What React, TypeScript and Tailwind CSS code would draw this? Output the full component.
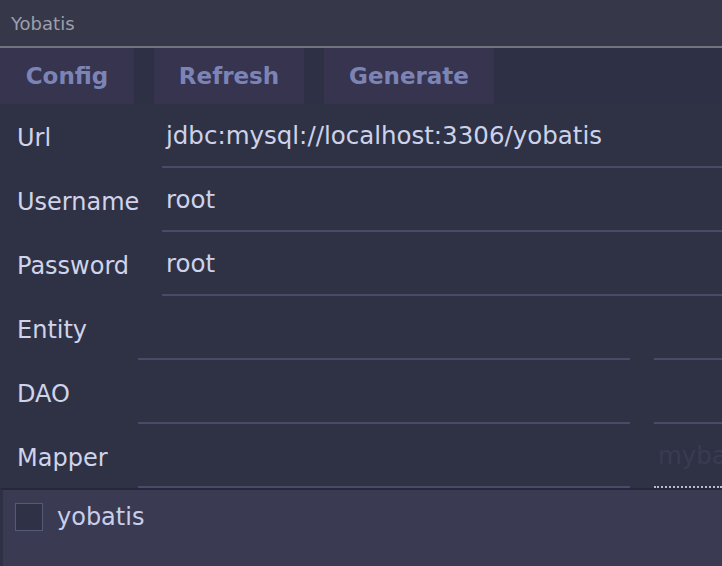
import React from "react";

const font = { fontFamily: '"DejaVu Sans", "Liberation Sans", sans-serif' };

function Row({ label, value }: { label: string; value?: string }) {
  return (
    <div className="flex h-[64px] items-stretch">
      <div className="w-[162px] pl-[17px] pt-[3px] flex items-center text-[24px] text-[#d0d4ea]">{label}</div>
      <div className="flex-1 border-b-2 border-[#4c4a6a] flex items-center pl-[4px] pt-[3px] text-[24.5px] text-[#cdd2ea] whitespace-nowrap">
        {value}
      </div>
    </div>
  );
}

function SplitRow({ label, placeholder, dotted }: { label: string; placeholder?: string; dotted?: boolean }) {
  return (
    <div className="flex h-[64px] items-stretch">
      <div className="w-[138px] pl-[17px] pt-[3px] flex items-center text-[24px] text-[#d0d4ea] whitespace-nowrap">{label}</div>
      <div className="w-[492px] border-b-2 border-[#4c4a6a]" />
      <div className="w-[24px]" />
      <div
        className={
          dotted
            ? "flex-1 border-b-2 border-dotted border-[#b9bacb] flex items-center pl-[4px] pt-[3px] overflow-hidden whitespace-nowrap text-[24.5px] text-[#393b55]"
            : "flex-1 border-b-2 border-[#4c4a6a]"
        }
      >
        {placeholder}
      </div>
    </div>
  );
}

export default function App() {
  return (
    <div className="w-[722px] h-[566px] bg-[#2f3245] flex flex-col overflow-hidden" style={font}>
      <div className="h-[46px] bg-[#363849] pl-[11px] flex items-center text-[18px] text-[#9d9fac]">
        Yobatis
      </div>
      <div className="h-[2px] bg-[#73747f]" />
      <div className="h-[56px] flex bg-[#2e3146] font-bold text-[23px] text-[#7c84b6]">
        <div className="w-[134px] bg-[#373450] flex items-center justify-center">Config</div>
        <div className="w-[20px]" />
        <div className="w-[150px] bg-[#373450] flex items-center justify-center">Refresh</div>
        <div className="w-[20px]" />
        <div className="w-[170px] bg-[#373450] flex items-center justify-center">Generate</div>
      </div>
      <Row label="Url" value="jdbc:mysql://localhost:3306/yobatis" />
      <Row label="Username" value="root" />
      <Row label="Password" value="root" />
      <SplitRow label="Entity" />
      <SplitRow label="DAO" />
      <SplitRow label="Mapper" placeholder="mybatis" dotted />
      <div className="flex-1 bg-[#3a3a53] border-t-2 border-[#25273a] border-l-[3px] border-l-[#2e3146] flex items-start pt-[13px] pl-[12px]">
        <div className="w-[28px] h-[28px] border border-[#575a77] bg-[#2f3246]" />
        <span className="ml-[14px] text-[24px] leading-[28px] text-[#c9cee9]">yobatis</span>
      </div>
    </div>
  );
}
